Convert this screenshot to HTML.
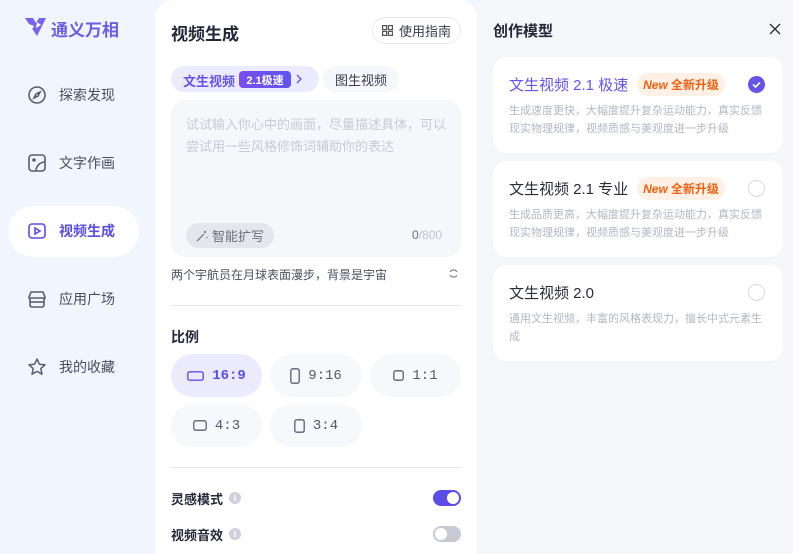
<!DOCTYPE html>
<html><head><meta charset="utf-8"><style>
*{margin:0;padding:0;box-sizing:border-box}
html,body{width:793px;height:554px;overflow:hidden}
body{background:#f1f5fe;font-family:"Liberation Sans","Noto Sans CJK SC",sans-serif;position:relative;color:#26283a}
.a{position:absolute}
.nav{position:absolute;left:0;width:150px;height:20px;display:flex;align-items:center;font-size:14px;color:#4a4d5e}
.nav svg{position:absolute;left:27px}
.nav span{position:absolute;left:59px}
.rb{position:absolute;height:43px;border-radius:22px;background:#f7f8fb;display:flex;align-items:center;justify-content:center;font-family:"Liberation Mono",monospace;font-size:14px;color:#55586a;gap:8px}
.card{position:absolute;left:493px;width:290px;height:96px;background:#fff;border-radius:14px}
.ct{position:absolute;left:16px;top:17px;font-size:15px;color:#2a2c3a}
.badge{position:absolute;left:144px;top:16px;width:88px;height:23px;border-radius:12px;background:#fff0e6;color:#f0600f;font-size:12px;font-weight:bold;display:flex;align-items:center;justify-content:center}
.badge i{margin-right:3px}
.cd{position:absolute;left:16px;top:45px;width:262px;font-size:11px;line-height:18px;color:#b3b6c4}
.rad{position:absolute;left:255px;top:19px;width:17px;height:17px;border-radius:50%;border:1px solid #d8dae2}
</style></head><body>
<!-- sidebar -->
<svg class="a" style="left:23px;top:16px" width="25" height="22" viewBox="0 0 25 22"><path d="M2 2h8l3 5 3-5h7l-9 18z" fill="#7a63f0"/><path d="M6 8l5 2-3 5z" fill="#fff"/><path d="M14 6l4 3-5 3z" fill="#fff"/></svg>
<div class="a" style="left:51px;top:16px;font-size:17px;font-weight:bold;color:#6c5ce7">通义万相</div>
<div class="nav" style="top:85px"><svg width="20" height="20" viewBox="0 0 20 20" fill="none" stroke="#5a5d70" stroke-width="1.6"><circle cx="10" cy="10" r="8"/><path d="M13 7l-2 4-4 2 2-4z"/></svg><span>探索发现</span></div>
<div class="nav" style="top:153px"><svg width="20" height="20" viewBox="0 0 20 20" fill="none" stroke="#5a5d70" stroke-width="1.6"><rect x="2" y="2" width="16" height="16" rx="3"/><circle cx="7" cy="7" r="1" fill="#5a5d70"/><path d="M9 18c0-5 4-9 9-9"/></svg><span>文字作画</span></div>
<div class="a" style="left:8px;top:206px;width:131px;height:51px;border-radius:26px;background:#fff"></div>
<div class="nav" style="top:221px;color:#5b4de6;font-weight:bold"><svg width="20" height="20" viewBox="0 0 20 20" fill="none" stroke="#5b4de6" stroke-width="1.6"><rect x="2" y="3" width="16" height="14" rx="3"/><path d="M8 7v6l5-3z"/></svg><span>视频生成</span></div>
<div class="nav" style="top:289px"><svg width="20" height="20" viewBox="0 0 20 20" fill="none" stroke="#5a5d70" stroke-width="1.6"><path d="M4 3h12l2 5v1H2V8z"/><path d="M3 9v7a2 2 0 002 2h10a2 2 0 002-2V9"/><path d="M3 13h14"/></svg><span>应用广场</span></div>
<div class="nav" style="top:357px"><svg width="20" height="20" viewBox="0 0 20 20" fill="none" stroke="#5a5d70" stroke-width="1.5"><path d="M10 2l2.4 5.2 5.6.6-4.2 3.8 1.2 5.6L10 14.4 5 17.2l1.2-5.6L2 7.8l5.6-.6z" stroke-linejoin="round"/></svg><span>我的收藏</span></div>
<!-- middle panel -->
<div class="a" style="left:155px;top:0;width:322px;height:554px;background:#fff;border-radius:18px 18px 0 0"></div>
<div class="a" style="left:171px;top:20px;font-size:17px;font-weight:bold;color:#26283a">视频生成</div>
<div class="a" style="left:372px;top:17px;width:89px;height:27px;border:1px solid #e8e9ef;border-radius:14px;font-size:13px;color:#3a3c4c;display:flex;align-items:center;justify-content:center;gap:6px"><svg width="11" height="11" viewBox="0 0 11 11" fill="none" stroke="#555" stroke-width="1.2"><rect x=".6" y=".6" width="4" height="4"/><rect x="6.4" y=".6" width="4" height="4"/><rect x=".6" y="6.4" width="4" height="4"/><rect x="6.4" y="6.4" width="4" height="4"/></svg>使用指南</div>
<div class="a" style="left:171px;top:66px;width:148px;height:26px;border-radius:13px;background:#ecebfd"></div>
<div class="a" style="left:183px;top:71px;font-size:13px;font-weight:bold;color:#6553ea">文生视频</div>
<div class="a" style="left:239px;top:71px;width:52px;height:17px;border-radius:4px;background:linear-gradient(90deg,#7a4df0,#5f55ee);color:#fff;font-size:11px;font-weight:bold;display:flex;align-items:center;justify-content:center">2.1极速</div>
<svg class="a" style="left:295px;top:73px" width="8" height="12" viewBox="0 0 8 12" fill="none" stroke="#6553ea" stroke-width="1.3"><path d="M2 2l4 4-4 4"/></svg>
<div class="a" style="left:323px;top:66px;width:76px;height:26px;border-radius:13px;background:#f6f7fa;font-size:13px;color:#3a3c4c;display:flex;align-items:center;justify-content:center">图生视频</div>
<div class="a" style="left:171px;top:100px;width:290px;height:157px;border-radius:14px;background:#f6f7fb"></div>
<div class="a" style="left:186px;top:114px;width:268px;font-size:13px;line-height:22px;color:#c8cad5">试试输入你心中的画面，尽量描述具体，可以尝试用一些风格修饰词辅助你的表达</div>
<div class="a" style="left:186px;top:223px;width:88px;height:25px;border-radius:13px;background:#e4e6ee;font-size:13px;color:#6a6d7c;display:flex;align-items:center;justify-content:center;gap:4px"><svg width="12" height="12" viewBox="0 0 12 12" fill="none" stroke="#6a6d7c" stroke-width="1.2"><path d="M1 11l7-7"/><path d="M9 1v2M10 2H8M11 7v1"/></svg>智能扩写</div>
<div class="a" style="left:412px;top:228px;font-size:12px;color:#6a6d7c">0<span style="color:#c0c3ce">/800</span></div>
<div class="a" style="left:171px;top:266px;font-size:12px;color:#4d5060">两个宇航员在月球表面漫步，背景是宇宙</div>
<svg class="a" style="left:448px;top:268px" width="11" height="11" viewBox="0 0 11 11" fill="none" stroke="#7a7d8c" stroke-width="1.1"><path d="M9 4A4 4 0 002 4M2 7a4 4 0 007 0"/></svg>
<div class="a" style="left:171px;top:305px;width:290px;height:1px;background:#e8e9ee"></div>
<div class="a" style="left:171px;top:327px;font-size:14px;font-weight:bold;color:#26283a">比例</div>
<div class="rb" style="left:171px;top:354px;width:91px;background:#ecebfd;color:#5b4de6;font-weight:bold"><svg width="17" height="10"><rect x=".8" y=".8" width="15.4" height="8.4" rx="2" fill="none" stroke="#5b4de6" stroke-width="1.4"/></svg>16:9</div>
<div class="rb" style="left:270px;top:354px;width:92px"><svg width="10" height="16"><rect x=".8" y=".8" width="8.4" height="14.4" rx="2" fill="none" stroke="#5a5d70" stroke-width="1.3"/></svg>9:16</div>
<div class="rb" style="left:370px;top:354px;width:91px"><svg width="11" height="11"><rect x=".8" y=".8" width="9.4" height="9.4" rx="2" fill="none" stroke="#5a5d70" stroke-width="1.3"/></svg>1:1</div>
<div class="rb" style="left:171px;top:404px;width:91px"><svg width="14" height="11"><rect x=".8" y=".8" width="12.4" height="9.4" rx="2" fill="none" stroke="#5a5d70" stroke-width="1.3"/></svg>4:3</div>
<div class="rb" style="left:270px;top:404px;width:92px"><svg width="11" height="14"><rect x=".8" y=".8" width="9.4" height="12.4" rx="2" fill="none" stroke="#5a5d70" stroke-width="1.3"/></svg>3:4</div>
<div class="a" style="left:171px;top:467px;width:290px;height:1px;background:#e8e9ee"></div>
<div class="a" style="left:171px;top:489px;font-size:13px;font-weight:bold;color:#26283a">灵感模式</div>
<div class="a" style="left:229px;top:492px;width:12px;height:12px;border-radius:50%;background:#cfd1da;color:#fff;font-size:9px;font-weight:bold;text-align:center;line-height:12px">i</div>
<div class="a" style="left:433px;top:490px;width:28px;height:16px;border-radius:8px;background:#5b4de6"><div class="a" style="left:14px;top:2px;width:12px;height:12px;border-radius:50%;background:#fff"></div></div>
<div class="a" style="left:171px;top:525px;font-size:13px;font-weight:bold;color:#26283a">视频音效</div>
<div class="a" style="left:229px;top:528px;width:12px;height:12px;border-radius:50%;background:#cfd1da;color:#fff;font-size:9px;font-weight:bold;text-align:center;line-height:12px">i</div>
<div class="a" style="left:433px;top:526px;width:28px;height:16px;border-radius:8px;background:#c8cad3"><div class="a" style="left:2px;top:2px;width:12px;height:12px;border-radius:50%;background:#fff"></div></div>
<!-- right panel -->
<div class="a" style="left:477px;top:0;width:316px;height:554px;background:#f5f6fa"></div>
<div class="a" style="left:493px;top:20px;font-size:15px;font-weight:bold;color:#26283a">创作模型</div>
<svg class="a" style="left:769px;top:23px" width="12" height="12" viewBox="0 0 12 12" stroke="#333" stroke-width="1.4"><path d="M1 1l10 10M11 1L1 11"/></svg>
<div class="card" style="top:57px"><div class="ct" style="color:#6553ea">文生视频 2.1 极速</div><div class="badge"><i>New</i>全新升级</div><div class="rad" style="border:none;background:#6553ea"><svg width="17" height="17"><path d="M5 8.5l2.5 2.5 4.5-4.5" fill="none" stroke="#fff" stroke-width="1.6"/></svg></div><div class="cd">生成速度更快，大幅度提升复杂运动能力，真实反馈现实物理规律，视频质感与美观度进一步升级</div></div>
<div class="card" style="top:161px"><div class="ct">文生视频 2.1 专业</div><div class="badge"><i>New</i>全新升级</div><div class="rad"></div><div class="cd">生成品质更高，大幅度提升复杂运动能力，真实反馈现实物理规律，视频质感与美观度进一步升级</div></div>
<div class="card" style="top:265px"><div class="ct">文生视频 2.0</div><div class="rad"></div><div class="cd">通用文生视频，丰富的风格表现力，擅长中式元素生成</div></div>
</body></html>
